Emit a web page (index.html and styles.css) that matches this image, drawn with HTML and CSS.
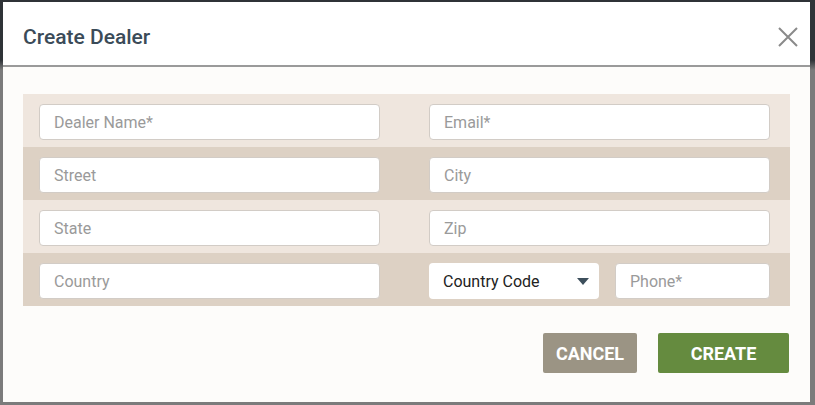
FILE: index.html
```html
<!DOCTYPE html>
<html lang="en">
<head>
  <meta charset="UTF-8">
  <meta name="viewport" content="width=device-width, initial-scale=1.0">
  <title>Create Dealer</title>
  <link rel="stylesheet" href="styles.css">
</head>
<body>
  <div class="overlay">
    <div class="modal">
      <div class="modal-header">
        <h2>Create Dealer</h2>
        <button class="close" aria-label="Close">
          <svg width="20" height="20" viewBox="0 0 20 20"><path d="M1 1 L19 19 M19 1 L1 19" stroke="#8a8a8a" stroke-width="2" fill="none"/></svg>
        </button>
      </div>
      <div class="modal-body">
        <div class="form-panel">
          <div class="row light">
            <input type="text" placeholder="Dealer Name*">
            <input type="text" placeholder="Email*">
          </div>
          <div class="row dark">
            <input type="text" placeholder="Street">
            <input type="text" placeholder="City">
          </div>
          <div class="row light">
            <input type="text" placeholder="State">
            <input type="text" placeholder="Zip">
          </div>
          <div class="row dark">
            <input type="text" placeholder="Country">
            <div class="phone-group">
              <div class="select">
                <span>Country Code</span>
                <span class="caret"></span>
              </div>
              <input type="text" placeholder="Phone*">
            </div>
          </div>
        </div>
        <div class="actions">
          <button class="btn cancel">CANCEL</button>
          <button class="btn create">CREATE</button>
        </div>
      </div>
    </div>
  </div>
</body>
</html>
```

FILE: styles.css
```css
* { box-sizing: border-box; }
body { margin: 0; font-family: Roboto, "Liberation Sans", sans-serif; background: #3a3e42; }
.overlay { height: 405px; padding: 2px 5px 3px 3px; background: linear-gradient(#2f3337 0, #2f3337 60px, #7b7b7b 70px, #7b7b7b 100%); }
.modal { height: 400px; background: #fdfcfa; display: flex; flex-direction: column; }
.modal-header { height: 65px; background: #fff; border-bottom: 2px solid #9a9a9a; display: flex; align-items: center; justify-content: space-between; padding: 6px 12px 0 20px; }
.modal-header h2 { margin: 0; font-size: 21px; font-weight: 500; color: #3b4b58; }
.close { border: none; background: none; padding: 0; width: 20px; height: 20px; cursor: pointer; display: flex; }
.modal-body { padding: 27px 20px 0 20px; }
.form-panel { display: flex; flex-direction: column; }
.row { height: 53px; display: grid; grid-template-columns: 1fr 1fr; column-gap: 49px; padding: 10px 20px 0 16px; }
.row.light { background: #efe6de; }
.row.dark { background: #ddd1c4; }
input[type="text"] { height: 36px; width: 100%; border: 1px solid #d2ccc6; border-radius: 4px; background: #fff; padding: 0 14px; font-family: inherit; font-size: 16px; color: #333; }
input::placeholder { color: #9a9a9a; }
.phone-group { display: flex; gap: 16px; }
.select { width: 170px; flex: none; height: 36px; background: #fff; border-radius: 4px; display: flex; align-items: center; justify-content: space-between; padding: 0 10px 0 14px; font-size: 16px; color: #222; }
.caret { width: 0; height: 0; border-left: 6px solid transparent; border-right: 6px solid transparent; border-top: 7px solid #3d4f5c; }
.phone-group input { flex: 1; }
.actions { display: flex; justify-content: flex-end; gap: 21px; margin-top: 27px; padding-right: 1px; }
.btn { height: 40px; border: none; border-radius: 2px; color: #fff; font-family: inherit; font-size: 18px; font-weight: 700; cursor: pointer; }
.cancel { width: 94px; background: #9b9484; }
.create { width: 131px; background: #658b3f; }
```
